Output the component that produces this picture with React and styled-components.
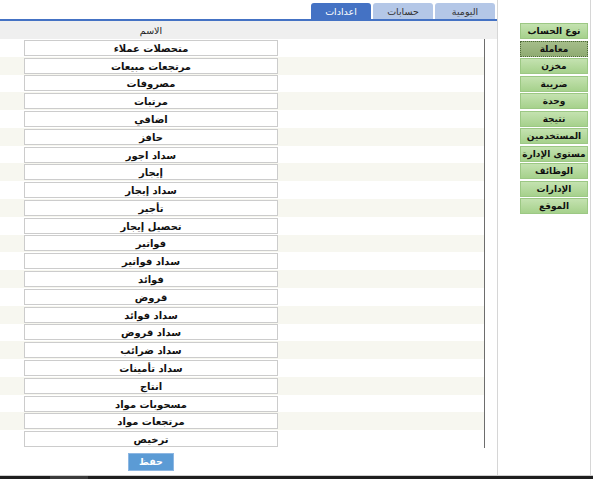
import React from 'react';
import styled, { createGlobalStyle } from 'styled-components';

const GlobalStyle = createGlobalStyle`
    html, body {
        margin: 0;
        padding: 0;
        background: #ffffff;
    }
    body {
        font-family: "DejaVu Sans", "Noto Sans", sans-serif;
    }
`;

const Screen = styled.div`
    width: 593px;
    height: 479px;
    display: flex;
    flex-direction: column;
    overflow: hidden;
`;

const Frame = styled.div`
    height: 475px;
    display: flex;
    border-bottom: 1px solid #cfcfcf;
`;

const Taskbar = styled.div`
    flex: 1;
    display: flex;
    background: #1f1f1f;
`;

const TaskbarItem = styled.div`
    width: 38px;
    margin-left: 50px;
    background: #3b3b3b;
`;

const MainPanel = styled.div`
    width: 497px;
    border-right: 1px solid #d6d6d6;
    display: flex;
    flex-direction: column;
`;

const TabStrip = styled.div`
    height: 19px;
    display: flex;
    flex-direction: row-reverse;
    align-items: flex-end;
    gap: 2px;
    padding-right: 2px;
    border-bottom: 2px solid #4472c4;
`;

const Tab = styled.div`
    width: 60px;
    height: 16px;
    border-radius: 3px 3px 0 0;
    background: ${p => (p.active ? '#4472c4' : '#b4c7e7')};
    color: ${p => (p.active ? '#ffffff' : '#333333')};
    font-size: 9.5px;
    letter-spacing: ${p => (p.active ? '1px' : '0')};
    display: flex;
    align-items: center;
    justify-content: center;
    direction: rtl;
`;

const HeaderRow = styled.div`
    height: 18px;
    background: #efefef;
    display: flex;
    align-items: center;
`;

const HeaderCell = styled.div`
    width: 254px;
    margin-left: 24px;
    text-align: center;
    font-size: 9.5px;
    color: #222222;
    direction: rtl;
`;

const ListArea = styled.div`
    width: 484px;
    height: 409px;
    border-right: 1px solid #6d6d6d;
    display: flex;
    flex-direction: column;
`;

const Row = styled.div`
    height: 17.8px;
    display: flex;
    align-items: center;
    background: ${p => (p.striped ? '#f7f7f0' : '#ffffff')};
`;

const NameInput = styled.div`
    width: 252px;
    height: 14px;
    margin-left: 24px;
    border: 1px solid #cccccc;
    background: #ffffff;
    font-size: 10px;
    font-weight: bold;
    color: #111111;
    line-height: 16px;
    text-align: center;
    direction: rtl;
    overflow: hidden;
`;

const Footer = styled.div`
    padding-top: 2px;
    padding-left: 128px;
`;

const SaveButton = styled.button`
    width: 46px;
    height: 18px;
    padding: 0;
    border: 1px solid #8db7e3;
    background: #5b9bd5;
    color: #ffffff;
    font-family: inherit;
    font-size: 9.5px;
    font-weight: bold;
    direction: rtl;
`;

const SidePanel = styled.div`
    width: 93px;
    margin-right: 1px;
    border-right: 1px solid #d6d6d6;
    padding-top: 23px;
    padding-left: 22px;
    padding-right: 2px;
    box-sizing: border-box;
    display: flex;
    flex-direction: column;
    gap: 1.5px;
`;

const MenuButton = styled.div`
    height: 14px;
    border: 1px ${p => (p.selected ? 'dotted #4f6a38' : 'solid #9cc884')};
    background: ${p => (p.selected
        ? 'linear-gradient(#a5bd8a, #8fab72)'
        : 'linear-gradient(#c4e2b0, #a6d18c)')};
    font-size: 9px;
    font-weight: bold;
    color: #111111;
    line-height: 15px;
    text-align: center;
    direction: rtl;
    white-space: nowrap;
    overflow: hidden;
`;

const tabs = [
    { label: 'اليومية' },
    { label: 'حسابات' },
    { label: 'اعدادات', active: true },
];

const names = [
    'متحصلات عملاء',
    'مرتجعات مبيعات',
    'مصروفات',
    'مرتبات',
    'اضاقي',
    'حافز',
    'سداد اجور',
    'إيجار',
    'سداد إيجار',
    'تأجير',
    'تحصيل إيجار',
    'فواتير',
    'سداد فواتير',
    'فوائد',
    'قروض',
    'سداد فوائد',
    'سداد قروض',
    'سداد ضرائب',
    'سداد تأمينات',
    'انتاج',
    'مسحوبات مواد',
    'مرتجعات مواد',
    'ترخيص',
];

const menu = [
    'نوع الحساب',
    'معاملة',
    'مخزن',
    'ضريبة',
    'وحدة',
    'نتيجة',
    'المستخدمين',
    'مستوى الإدارة',
    'الوظائف',
    'الإدارات',
    'الموقع',
];

const App = () => (
    <Screen>
        <GlobalStyle />
        <Frame>
            <MainPanel>
                <TabStrip>
                    {tabs.map(t => (
                        <Tab key={t.label} active={t.active}>{t.label}</Tab>
                    ))}
                </TabStrip>
                <HeaderRow>
                    <HeaderCell>الاسم</HeaderCell>
                </HeaderRow>
                <ListArea>
                    {names.map((n, i) => (
                        <Row key={n} striped={i % 2 === 1}>
                            <NameInput>{n}</NameInput>
                        </Row>
                    ))}
                </ListArea>
                <Footer>
                    <SaveButton>حفظ</SaveButton>
                </Footer>
            </MainPanel>
            <SidePanel>
                {menu.map(m => (
                    <MenuButton key={m} selected={m === 'معاملة'}>{m}</MenuButton>
                ))}
            </SidePanel>
        </Frame>
        <Taskbar>
            <TaskbarItem />
        </Taskbar>
    </Screen>
);

export default App;
